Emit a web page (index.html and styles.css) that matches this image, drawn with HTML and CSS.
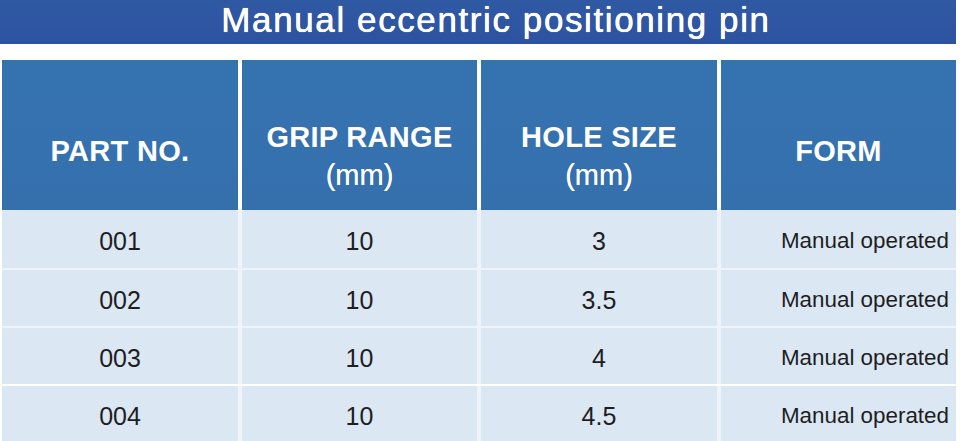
FILE: index.html
```html
<!DOCTYPE html>
<html lang="en">
<head>
<meta charset="utf-8">
<title>Manual eccentric positioning pin</title>
<link rel="stylesheet" href="styles.css">
</head>
<body>
<div class="page">
  <h1 class="title">Manual eccentric positioning pin</h1>
  <div class="table">
    <div class="head">
      <div class="hcell single"><span>PART NO.</span></div>
      <div class="hcell double"><span>GRIP RANGE</span><span class="unit">(mm)</span></div>
      <div class="hcell double"><span>HOLE SIZE</span><span class="unit">(mm)</span></div>
      <div class="hcell single"><span>FORM</span></div>
    </div>
    <div class="body">
      <div class="row">
        <div class="cell">001</div><div class="cell">10</div><div class="cell">3</div><div class="cell form">Manual operated</div>
      </div>
      <div class="row">
        <div class="cell">002</div><div class="cell">10</div><div class="cell">3.5</div><div class="cell form">Manual operated</div>
      </div>
      <div class="row">
        <div class="cell">003</div><div class="cell">10</div><div class="cell">4</div><div class="cell form">Manual operated</div>
      </div>
      <div class="row last">
        <div class="cell">004</div><div class="cell">10</div><div class="cell">4.5</div><div class="cell form">Manual operated</div>
      </div>
    </div>
  </div>
</div>
</body>
</html>
```
FILE: styles.css
```css
html, body {
  margin: 0;
  padding: 0;
  background: #ffffff;
}
.page {
  width: 960px;
  height: 441px;
  overflow: hidden;
  font-family: "Liberation Sans", Arial, sans-serif;
}
.title {
  margin: 0;
  width: 956px;
  height: 44px;
  background: linear-gradient(180deg, #3059a4 0%, #2c53a0 100%);
  color: #ffffff;
  font-size: 35px;
  font-weight: normal;
  letter-spacing: 1.6px;
  line-height: normal;
  text-align: center;
  box-sizing: border-box;
  padding-left: 36px;
  text-shadow: 0 0 0.8px #ffffff, 0 0 0.4px #ffffff;
}
.table {
  margin-top: 16px;
  padding-left: 2px;
  width: 954px;
}
.head {
  display: grid;
  grid-template-columns: 236px 235px 236px 235px;
  column-gap: 4px;
  height: 150px;
}
.hcell {
  background: linear-gradient(180deg, #3573b0 0%, #3570ad 100%);
  color: #ffffff;
  font-weight: bold;
  font-size: 29px;
  letter-spacing: 0.3px;
  display: flex;
  flex-direction: column;
  align-items: center;
  justify-content: flex-start;
  box-sizing: border-box;
  line-height: 38px;
}
.hcell.single {
  padding-top: 72px;
}
.hcell.double {
  padding-top: 58px;
}
.hcell .unit {
  font-weight: normal;
  letter-spacing: 0;
  text-shadow: 0 0 0.6px #fff;
}
.body {
  background: #eef4fb;
}
.row {
  display: grid;
  grid-template-columns: 236px 235px 236px 235px;
  column-gap: 4px;
  height: 58px;
  border-top: 2px solid #eef4fb;
  box-sizing: border-box;
}
.row:first-child {
  border-top: 0;
}
.row.last {
  border-top: 2px solid #ffffff;
}
.cell {
  background: #dce7f4;
  color: #1e1e1e;
  font-size: 25px;
  display: flex;
  align-items: center;
  justify-content: center;
  padding-top: 4px;
  box-sizing: border-box;
}
.cell.form {
  justify-content: flex-end;
  font-size: 22.4px;
  padding-right: 7px;
}
```
